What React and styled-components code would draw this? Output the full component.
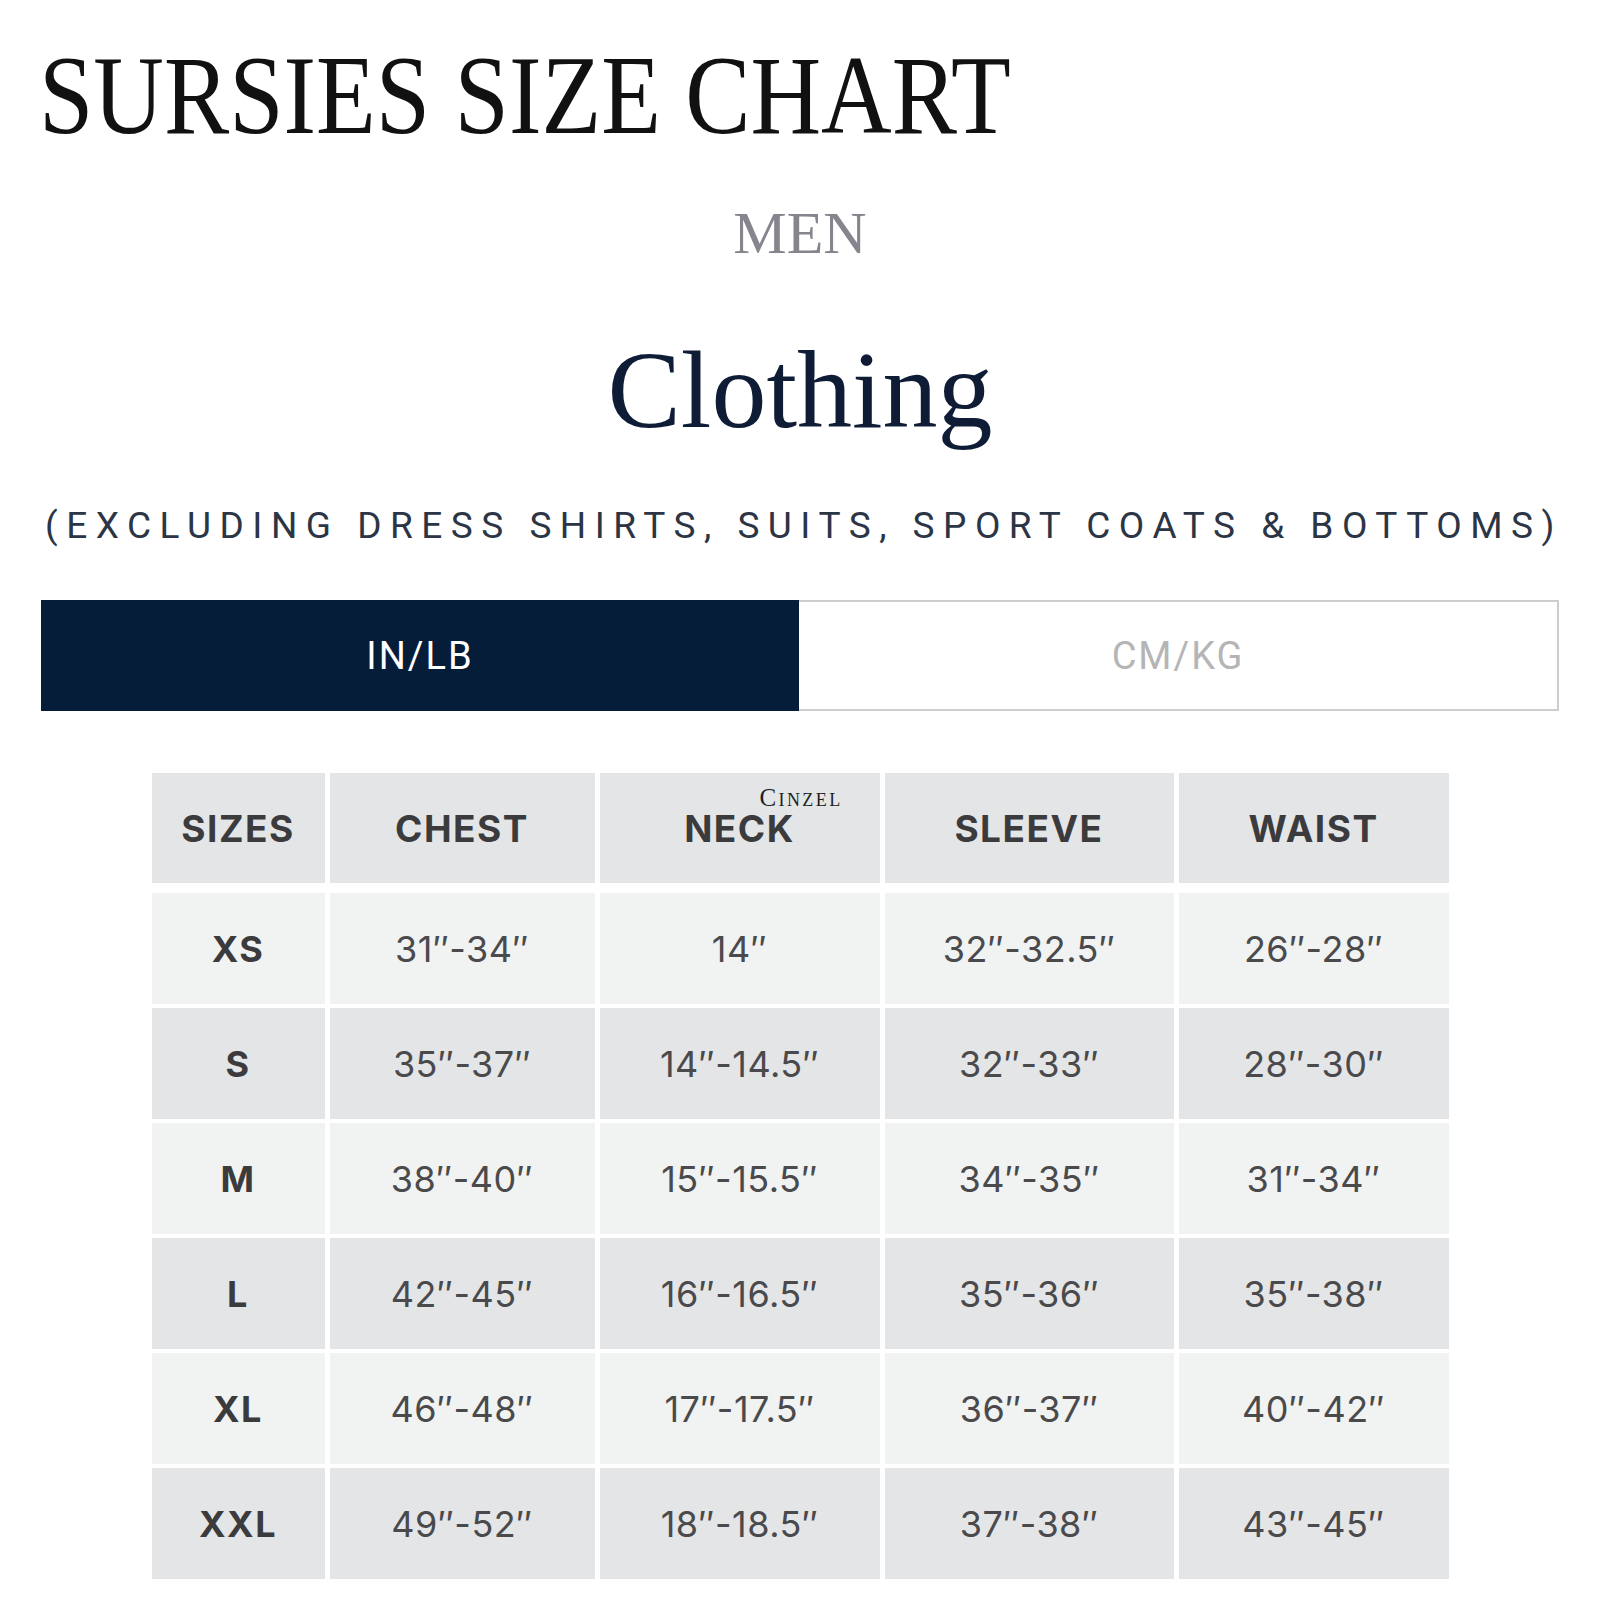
import React from "react";
import styled, { createGlobalStyle } from "styled-components";

const Global = createGlobalStyle`
  html, body { margin: 0; padding: 0; background: #ffffff; }
  body { font-family: "Liberation Serif", serif; }
`;

const Page = styled.div`
  width: 1600px;
  min-height: 1600px;
  background: #ffffff;
  display: flex;
  flex-direction: column;
  padding-bottom: 20px;
`;

const Title = styled.h1`
  margin: 0;
  padding: 38px 0 0 39px;
  font-family: "Liberation Serif", "Times New Roman", serif;
  font-weight: 400;
  font-size: 113px;
  line-height: 113px;
  color: #111111;
  white-space: nowrap;
  span {
    display: inline-block;
    transform: scaleX(0.865);
    transform-origin: left center;
  }
`;

const Gender = styled.h2`
  margin: 52px 0 0;
  text-align: center;
  font-family: "Liberation Serif", "Times New Roman", serif;
  font-weight: 400;
  font-size: 60px;
  line-height: 60px;
  color: #85868d;
`;

const Category = styled.h3`
  margin: 72px 0 0;
  text-align: center;
  font-family: "Liberation Serif", "Times New Roman", serif;
  font-weight: 400;
  font-size: 110px;
  line-height: 110px;
  color: #0e1c36;
`;

const Note = styled.p`
  margin: 63px 0 0;
  padding-left: 8px;
  text-align: center;
  font-family: Roboto, "Liberation Sans", sans-serif;
  font-size: 37px;
  line-height: 36px;
  letter-spacing: 8.5px;
  color: #2b3545;
  white-space: nowrap;
`;

const Toggle = styled.div`
  margin: 56px auto 0;
  width: 1518px;
  height: 111px;
  box-sizing: border-box;
  border: 2px solid #cdcdcd;
  display: flex;
`;

const ToggleOption = styled.div`
  flex: 1;
  display: flex;
  align-items: center;
  justify-content: center;
  background: ${(p) => (p.$active ? "#061d39" : "#ffffff")};
  color: ${(p) => (p.$active ? "#ffffff" : "#b5b5b5")};
  margin: ${(p) => (p.$active ? "-2px 0 -2px -2px" : "0")};
  font-family: Roboto, "Liberation Sans", sans-serif;
  font-size: 38px;
  letter-spacing: 2px;
`;

const TableWrap = styled.div`
  margin: 62px auto 0;
  display: grid;
  grid-template-columns: 173px 265px 280px 289px 270px;
  grid-template-rows: 116px repeat(6, 111px);
  column-gap: 5px;
  row-gap: 4px;
`;

const HeaderCell = styled.div`
  position: relative;
  height: 110px;
  align-self: start;
  background: #e4e5e7;
  display: flex;
  align-items: center;
  justify-content: center;
  font-family: Inter, "Open Sans", sans-serif;
  font-weight: 700;
  font-size: 37px;
  letter-spacing: 1.5px;
  color: #3b3b3d;
`;

const Cell = styled.div`
  background: ${(p) => (p.$shade ? "#e4e5e7" : "#f1f2f2")};
  display: flex;
  align-items: center;
  justify-content: center;
  font-family: Inter, "Open Sans", sans-serif;
  font-weight: ${(p) => (p.$bold ? 700 : 400)};
  font-size: 36px;
  letter-spacing: ${(p) => (p.$bold ? "1.5px" : "0.5px")};
  color: ${(p) => (p.$bold ? "#3b3b3d" : "#4a4a4c")};
`;

const Watermark = styled.span`
  position: absolute;
  left: 160px;
  top: 12px;
  font-family: "Liberation Serif", "Times New Roman", serif;
  font-variant: small-caps;
  font-weight: 400;
  font-size: 25px;
  line-height: 25px;
  letter-spacing: 2.4px;
  color: #1e1e1e;
`;

const headers = ["SIZES", "CHEST", "NECK", "SLEEVE", "WAIST"];
const rows = [
  ["XS", "31″-34″", "14″", "32″-32.5″", "26″-28″"],
  ["S", "35″-37″", "14″-14.5″", "32″-33″", "28″-30″"],
  ["M", "38″-40″", "15″-15.5″", "34″-35″", "31″-34″"],
  ["L", "42″-45″", "16″-16.5″", "35″-36″", "35″-38″"],
  ["XL", "46″-48″", "17″-17.5″", "36″-37″", "40″-42″"],
  ["XXL", "49″-52″", "18″-18.5″", "37″-38″", "43″-45″"],
];

export default function App() {
  return (
    <>
      <Global />
      <Page>
        <Title>
          <span>SURSIES SIZE CHART</span>
        </Title>
        <Gender>MEN</Gender>
        <Category>Clothing</Category>
        <Note>(EXCLUDING DRESS SHIRTS, SUITS, SPORT COATS &amp; BOTTOMS)</Note>
        <Toggle>
          <ToggleOption $active>IN/LB</ToggleOption>
          <ToggleOption>CM/KG</ToggleOption>
        </Toggle>
        <TableWrap>
          {headers.map((h) => (
            <HeaderCell key={h}>
              {h}
              {h === "NECK" && <Watermark>Cinzel</Watermark>}
            </HeaderCell>
          ))}
          {rows.map((r, i) =>
            r.map((v, j) => (
              <Cell key={`${i}-${j}`} $shade={i % 2 === 1} $bold={j === 0}>
                {v}
              </Cell>
            ))
          )}
        </TableWrap>
      </Page>
    </>
  );
}
